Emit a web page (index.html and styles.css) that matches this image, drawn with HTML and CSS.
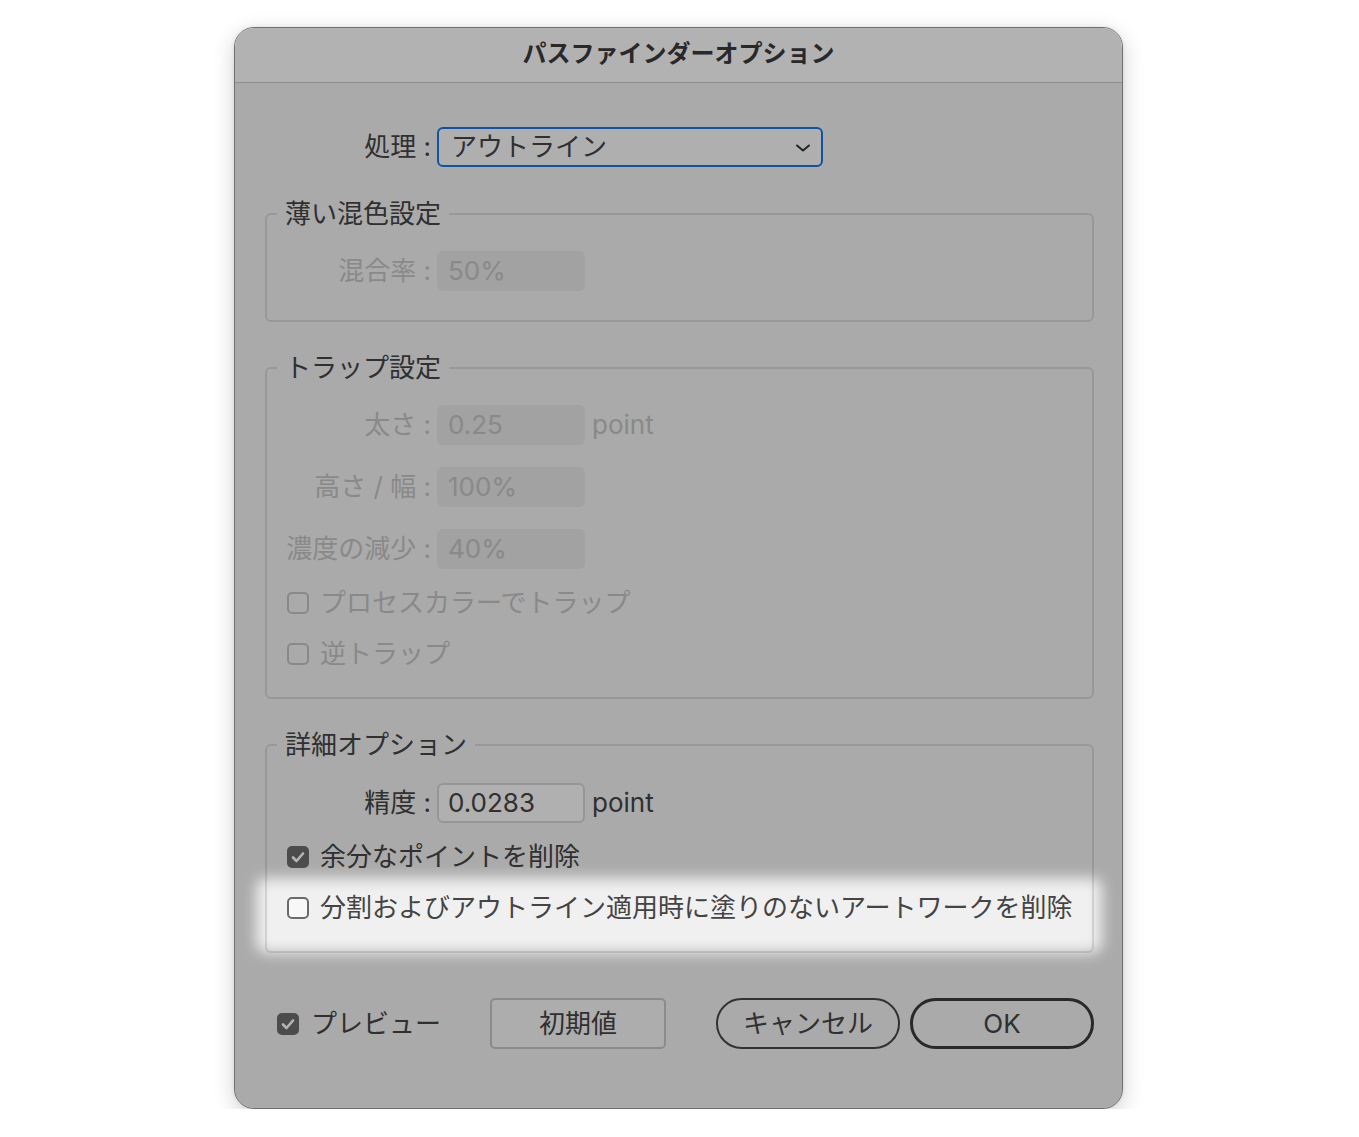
FILE: index.html
```html
<!DOCTYPE html>
<html lang="ja">
<head>
<meta charset="utf-8">
<title>パスファインダーオプション</title>
<link rel="stylesheet" href="styles.css">
</head>
<body>
<div class="dialog">
  <div class="titlebar">パスファインダーオプション</div>
  <div class="content">
    <div class="row top-row">
      <span class="lbl">処理 :</span>
      <div class="select">
        <span>アウトライン</span>
        <svg class="chev" width="16" height="10" viewBox="0 0 16 10"><path d="M2 2.5 L8 7.5 L14 2.5" fill="none" stroke="#333" stroke-width="2" stroke-linecap="round" stroke-linejoin="round"/></svg>
      </div>
    </div>

    <fieldset class="group g1">
      <legend>薄い混色設定</legend>
      <div class="row">
        <span class="lbl off">混合率 :</span>
        <div class="input off">50%</div>
      </div>
    </fieldset>

    <fieldset class="group g2">
      <legend>トラップ設定</legend>
      <div class="row">
        <span class="lbl off">太さ :</span>
        <div class="input off">0.25</div>
        <span class="unit off">point</span>
      </div>
      <div class="row">
        <span class="lbl off">高さ / 幅 :</span>
        <div class="input off">100%</div>
      </div>
      <div class="row">
        <span class="lbl off">濃度の減少 :</span>
        <div class="input off">40%</div>
      </div>
      <div class="check off"><span class="box"></span><span>プロセスカラーでトラップ</span></div>
      <div class="check off"><span class="box"></span><span>逆トラップ</span></div>
    </fieldset>

    <fieldset class="group g3">
      <legend>詳細オプション</legend>
      <div class="row">
        <span class="lbl">精度 :</span>
        <div class="input">0.0283</div>
        <span class="unit">point</span>
      </div>
      <div class="check"><span class="box on"><svg width="14" height="12" viewBox="0 0 14 12"><path d="M2 6.5 L5.5 10 L12 2.5" fill="none" stroke="#fff" stroke-width="2.6" stroke-linecap="round" stroke-linejoin="round"/></svg></span><span>余分なポイントを削除</span></div>
      <div class="check"><span class="box"></span><span>分割およびアウトライン適用時に塗りのないアートワークを削除</span></div>
    </fieldset>

    <div class="footer">
      <div class="check preview"><span class="box on"><svg width="14" height="12" viewBox="0 0 14 12"><path d="M2 6.5 L5.5 10 L12 2.5" fill="none" stroke="#fff" stroke-width="2.6" stroke-linecap="round" stroke-linejoin="round"/></svg></span><span>プレビュー</span></div>
      <div class="btn reset">初期値</div>
      <div class="btn pill cancel">キャンセル</div>
      <div class="btn pill ok">OK</div>
    </div>
  </div>

  <svg class="dim" width="100%" height="100%">
    <defs>
      <filter id="soft" x="-20%" y="-60%" width="140%" height="220%">
        <feGaussianBlur stdDeviation="7"/>
      </filter>
      <mask id="hole">
        <rect x="0" y="0" width="100%" height="100%" fill="#fff"/>
        <rect x="21" y="850" width="846" height="75" rx="10" fill="#000" filter="url(#soft)"/>
      </mask>
    </defs>
    <rect x="0" y="0" width="100%" height="100%" fill="rgba(0,0,0,0.29)" mask="url(#hole)"/>
  </svg>
</div>
</body>
</html>
```

FILE: styles.css
```css
* { box-sizing: border-box; }

body {
  margin: 0;
  background: #ffffff;
  font-family: "Inter", "Noto Sans CJK JP", sans-serif;
  color: #444444;
}

.dialog {
  position: relative;
  width: 889px;
  height: 1082px;
  margin: 27px 0 0 234px;
  border: 1px solid #707070;
  border-radius: 20px;
  background: #f0f0f0;
  overflow: hidden;
  box-shadow: 0 6px 22px rgba(0, 0, 0, 0.18), 0 0 4px rgba(0, 0, 0, 0.08);
}

.titlebar {
  height: 55px;
  background: #fbfbfb;
  border-bottom: 1px solid #c9c9c9;
  text-align: center;
  font-family: "Noto Sans CJK JP", sans-serif;
  font-weight: 700;
  font-size: 24px;
  line-height: 48px;
  color: #3a3a3a;
}

.content {
  padding: 44px 28px 0 30px;
}

.row {
  display: flex;
  align-items: center;
  height: 40px;
  font-size: 26px;
  line-height: 30px;
}

.top-row { padding-left: 20px; }

.lbl {
  flex: none;
  width: 146px;
  margin-right: 6px;
  text-align: right;
  white-space: nowrap;
}

.lbl.off, .unit.off, .input.off, .check.off { color: #c2c2c2; }

.select {
  display: flex;
  align-items: center;
  justify-content: space-between;
  width: 386px;
  height: 40px;
  padding: 0 10px 0 12px;
  border: 2px solid #1a74e8;
  border-radius: 6px;
  background: #f7f7f7;
}

.chev { display: block; margin-top: 1px; }

.input {
  width: 148px;
  height: 40px;
  padding-left: 9px;
  border: 2px solid #d3d3d3;
  border-radius: 6px;
  background: #f8f8f8;
  line-height: 36px;
  color: #444444;
}

.input.off {
  border-color: transparent;
  background: #e4e4e4;
}

.unit { margin-left: 7px; }

.group {
  margin: 32px 0 0;
  padding: 22px 18px 28px;
  border: 2px solid #d6d6d6;
  border-radius: 6px;
  min-width: 0;
}

.group.g1 { padding-bottom: 29px; }
.group.g2 { margin-top: 31px; }
.group.g3 { margin-top: 31px; padding-top: 23px; }

.group legend {
  margin-left: -8px;
  padding: 0 8px;
  font-size: 26px;
  line-height: 30px;
  color: #444444;
}

.row + .row { margin-top: 22px; }
.row + .check { margin-top: 19px; }
.check + .check { margin-top: 21px; }

.check {
  display: flex;
  align-items: center;
  gap: 11px;
  height: 30px;
  padding-left: 2px;
  font-size: 26px;
  line-height: 30px;
  white-space: nowrap;
}

.box {
  flex: none;
  display: flex;
  align-items: center;
  justify-content: center;
  width: 22px;
  height: 22px;
  border: 2px solid #6a6a6a;
  border-radius: 5px;
  background: #f7f7f7;
}

.check.off .box { border-color: #c2c2c2; background: transparent; }

.box.on {
  border-color: #6c6c6c;
  background: #6c6c6c;
}

.footer {
  display: flex;
  align-items: center;
  height: 51px;
  margin-top: 45px;
  padding-left: 12px;
}

.preview { padding-left: 0; gap: 12px; }

.btn {
  display: flex;
  align-items: center;
  justify-content: center;
  height: 51px;
  font-size: 26px;
  line-height: 30px;
  color: #444444;
}

.reset {
  width: 176px;
  margin-left: 49px;
  border: 2px solid #c4c4c4;
  border-radius: 5px;
  background: #f4f4f4;
}

.pill { border-radius: 26px; }

.cancel {
  width: 184px;
  margin-left: auto;
  border: 2px solid #474747;
}

.ok {
  width: 184px;
  margin-left: 10px;
  border: 3px solid #3a3a3a;
}

.dim {
  position: absolute;
  left: 0;
  top: 0;
  z-index: 10;
  pointer-events: none;
}
```
